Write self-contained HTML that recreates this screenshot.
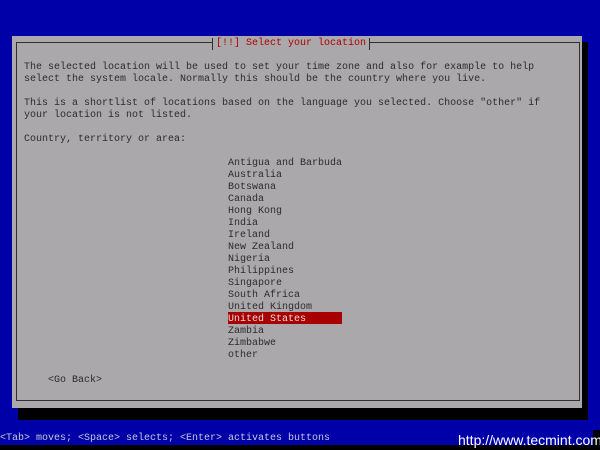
<!DOCTYPE html>
<html><head><style>
body{margin:0;width:600px;height:450px;background:#0000a8;position:relative;overflow:hidden;font-family:"Liberation Mono","DejaVu Sans Mono",monospace;font-size:10px;}
div{position:absolute;}
.t{color:#2c2c2c;white-space:pre;line-height:12px;}
</style></head><body>
<div style="left:18px;top:42px;width:570px;height:378px;background:#000"></div>
<div style="left:12px;top:36px;width:570px;height:372px;background:#aaa8aa"></div>
<div style="left:16px;top:42px;width:562px;height:357px;border:1px solid #303030"></div>
<div class="t" style="left:212px;top:38px;background:#aaa8aa;color:#b00000;padding:0 3px;border-left:1px solid #303030;border-right:1px solid #303030;">[!!] Select your location</div>
<div class="t" style="left:24px;top:62px;">The selected location will be used to set your time zone and also for example to help
select the system locale. Normally this should be the country where you live.

This is a shortlist of locations based on the language you selected. Choose "other" if
your location is not listed.

Country, territory or area:</div>
<div style="left:228px;top:312px;width:114px;height:12px;background:#a80000"></div>
<div class="t" style="left:228px;top:158px;">Antigua and Barbuda
Australia
Botswana
Canada
Hong Kong
India
Ireland
New Zealand
Nigeria
Philippines
Singapore
South Africa
United Kingdom
<span style="color:#e8e0e0">United States</span>
Zambia
Zimbabwe
other</div>
<div class="t" style="left:48px;top:375px;">&lt;Go Back&gt;</div>
<div class="t" style="left:0;top:433px;color:#c8c8d8;">&lt;Tab&gt; moves; &lt;Space&gt; selects; &lt;Enter&gt; activates buttons</div>
<div style="left:0;top:445px;width:600px;height:5px;background:#000"></div>
<div style="left:593px;top:430px;width:7px;height:20px;background:#000"></div>
<div style="left:458px;top:432px;color:#fff;font-family:'Liberation Sans',sans-serif;font-size:14px;line-height:16px;">http://www.tecmint.com</div>
</body></html>
